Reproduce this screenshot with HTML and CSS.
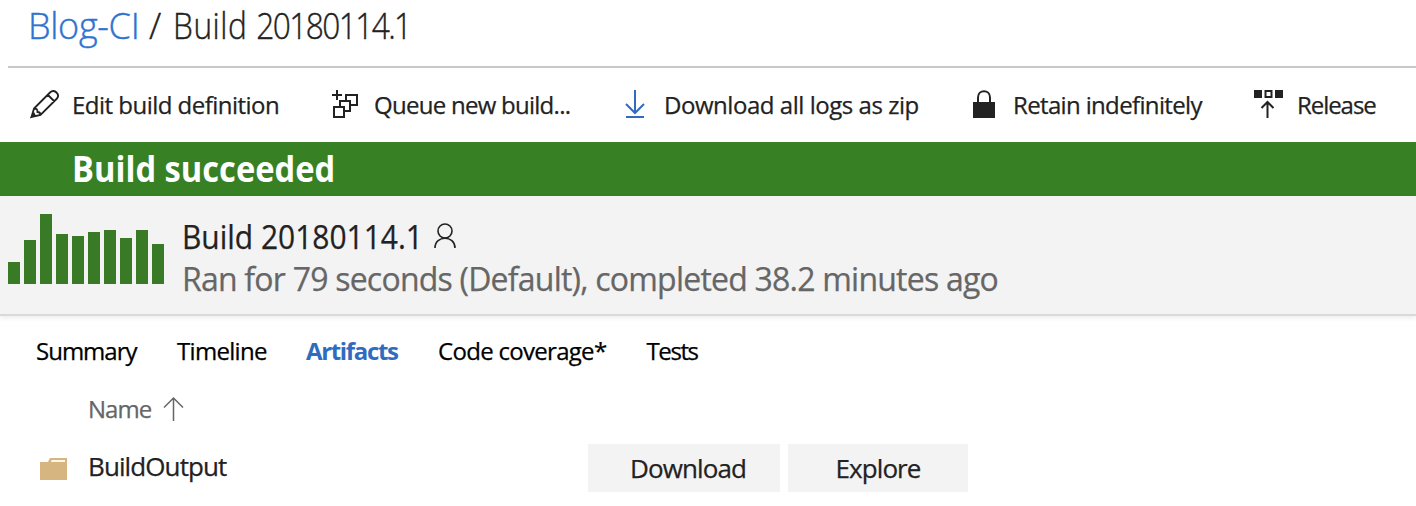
FILE: index.html
```html
<!DOCTYPE html>
<html lang="en">
<head>
<meta charset="utf-8">
<title>Build 20180114.1</title>
<link rel="stylesheet" href="styles.css">
</head>
<body>
<header class="title"><a class="title-link">Blog-CI</a><span class="title-sep">/</span><span class="title-build">Build <span class="title-number">20180114.1</span></span></header>
<nav class="toolbar">
  <div class="tool tool-edit"><svg class="icon" width="30" height="30" viewBox="0 0 30 30" fill="none" stroke="#222" stroke-width="1.800"><path d="M1.500 27l2.500-8.500L20 2.500c2.500-2.500 5-1.500 6.500 0s2.500 4 0 6.500L10.500 25zM4 18.500c3 0 3.500 1 3.500 3.500 2.500 0 3 1 3 3M18 5l6.500 6.500M1.500 27l2.500-3 1 2z"/></svg><span>Edit build definition</span></div>
  <div class="tool tool-queue"><svg class="icon" width="30" height="30" viewBox="0 0 30 30" fill="none" stroke="#222" stroke-width="2"><path d="M6 0v10M1 5h10M3 17h10v10H3zM9 17v-6h10v10h-6M15 11V5h11v10h-7"/></svg><span>Queue new build...</span></div>
  <div class="tool tool-logs"><svg class="icon" width="30" height="30" viewBox="0 0 30 30" fill="none" stroke="#2f6cc0" stroke-width="2"><path d="M11 0v23M2 14l9 9 9-9M2 27h18"/></svg><span>Download all logs as zip</span></div>
  <div class="tool tool-retain"><svg class="icon" width="30" height="30" viewBox="0 0 30 30"><path d="M1 12h22v16H1z" fill="#222"/><path d="M6 13V7.500C6-1 18-1 18 7.500V13" fill="none" stroke="#222" stroke-width="2"/></svg><span>Retain indefinitely</span></div>
  <div class="tool tool-release"><svg class="icon" width="30" height="30" viewBox="0 0 30 30"><path d="M0 0h8v8H0zM21 0h8v8h-8z" fill="#222"/><path d="M11.500 1h6v6h-6zM13.500 28V12M7.500 18l6-6 6 6" fill="none" stroke="#222" stroke-width="2"/></svg><span>Release</span></div>
</nav>
<div class="banner"><span class="banner-text">Build succeeded</span></div>
<section class="summary">
  <div class="chart"><i style="height:22px"></i><i style="height:44px"></i><i style="height:70px"></i><i style="height:50px"></i><i style="height:48px"></i><i style="height:52px"></i><i style="height:54px"></i><i style="height:46px"></i><i style="height:54px"></i><i style="height:40px"></i></div>
  <div class="info">
    <div class="info-title"><span class="info-name">Build 20180114.1</span><svg class="person" width="24" height="26" viewBox="0 0 24 26" fill="none" stroke="#222" stroke-width="1.600"><circle cx="12" cy="8" r="7"/><path d="M2 25c0-13 20-13 20 0"/></svg></div>
    <div class="info-sub">Ran for 79 seconds (Default), completed 38.2 minutes ago</div>
  </div>
</section>
<nav class="tabs"><div class="tab-summary">Summary</div><div class="tab-timeline">Timeline</div><div class="tab-artifacts">Artifacts</div><div class="tab-coverage">Code coverage*</div><div class="tab-tests">Tests</div></nav>
<div class="columns"><span>Name</span><svg class="sort" width="22" height="26" viewBox="0 0 22 26" fill="none" stroke="#666" stroke-width="1.500"><path d="M10.500 25V2M1 11.500L10.500 2 20 11.500"/></svg></div>
<div class="row">
  <svg class="folder" width="28" height="24" viewBox="0 0 28 24"><path d="M0 5h8l2-4h17v22H0z" fill="#d7b580"/><path d="M11.500 3H25v2H11z" fill="#fff6e6"/></svg>
  <span class="name">BuildOutput</span>
  <button class="btn btn-download">Download</button><button class="btn btn-explore">Explore</button>
</div>
</body>
</html>
```
FILE: styles.css
```css
* { box-sizing: border-box; }
body { margin: 0; height: 506px; overflow: hidden; background: #fff; color: #222; font-family: "Open Sans", sans-serif; font-size: 24px; white-space: nowrap; -webkit-text-stroke: 0.25px; }
.title { display: flex; height: 68px; margin-left: 8px; padding-left: 20px; border-bottom: 2px solid #c8c8c8; font-size: 36px; line-height: 52px; font-weight: 300; -webkit-text-stroke: 0.4px; }
.title-link { width: 121px; color: #2f73d0; letter-spacing: -0.3px; }
.title-sep { width: 24px; }
.title-build { letter-spacing: 0.6px; transform: scaleX(.88); transform-origin: left; }
.title-number { letter-spacing: -1.8px; }
.toolbar { display: flex; height: 74px; padding-left: 30px; align-items: center; line-height: 34px; }
.tool { display: flex; flex: none; align-items: center; }
.icon { flex: none; margin-right: 12px; }
.tool-edit { width: 301px; letter-spacing: -0.52px; }
.tool-queue { width: 293px; letter-spacing: -0.73px; }
.tool-queue .icon, .tool-release .icon { margin-right: 13px; }
.tool-logs { width: 348px; letter-spacing: -0.46px; }
.tool-logs .icon { margin-right: 10px; }
.tool-retain { width: 282px; letter-spacing: -0.65px; }
.tool-retain .icon { margin-right: 11px; }
.tool-release { letter-spacing: -1.05px; }
.banner { height: 54px; padding-left: 72px; background: #388024; color: #fff; font-size: 36px; line-height: 54px; font-weight: 700; -webkit-text-stroke: 0; }
.banner-text { display: inline-block; transform: scaleX(.908); transform-origin: left; }
.summary { display: flex; height: 120px; padding: 18px 0 0 8px; background: #f3f3f3; border-bottom: 2px solid #d9d9d9; box-shadow: 0 2px 5px rgba(0,0,0,.08); }
.chart { display: flex; height: 70px; width: 174px; gap: 4px; align-items: flex-end; }
.chart i { width: 12px; background: #387a25; }
.info { padding-top: 2px; font-size: 32px; line-height: 42px; }
.info-title { display: flex; align-items: center; height: 42px; }
.info-name { width: 239px; transform: scaleX(.936); transform-origin: left; }
.person { margin: -2px 0 0 12px; }
.info-sub { color: #666; height: 42px; letter-spacing: -0.78px; }
.tabs { display: flex; height: 70px; padding-left: 36px; align-items: center; line-height: 34px; color: #000; letter-spacing: -0.7px; }
.tab-summary { width: 141px; letter-spacing: -1px; }
.tab-timeline { width: 129px; }
.tab-artifacts { width: 132px; color: #2f6cc0; font-weight: 700; letter-spacing: -1.35px; -webkit-text-stroke: 0; }
.tab-coverage { width: 208.5px; }
.tab-tests { letter-spacing: -1.4px; }
.columns { display: flex; height: 45px; padding-left: 88px; align-items: center; color: #666; line-height: 34px; letter-spacing: -1px; }
.sort { margin-left: 12px; }
.row { display: flex; height: 73px; padding: 13px 0 0 40px; font-size: 26px; line-height: 48px; letter-spacing: -0.9px; }
.folder { margin: 13px 20px 0 0; }
.name { width: 500px; height: 48px; margin-top: -2px; }
.btn { height: 48px; padding: 0; border: 0; margin-right: 8px; background: #f3f3f3; color: #222; font: inherit; letter-spacing: inherit; }
.btn-download { width: 192px; padding-left: 8px; }
.btn-explore { width: 180px; }
```
